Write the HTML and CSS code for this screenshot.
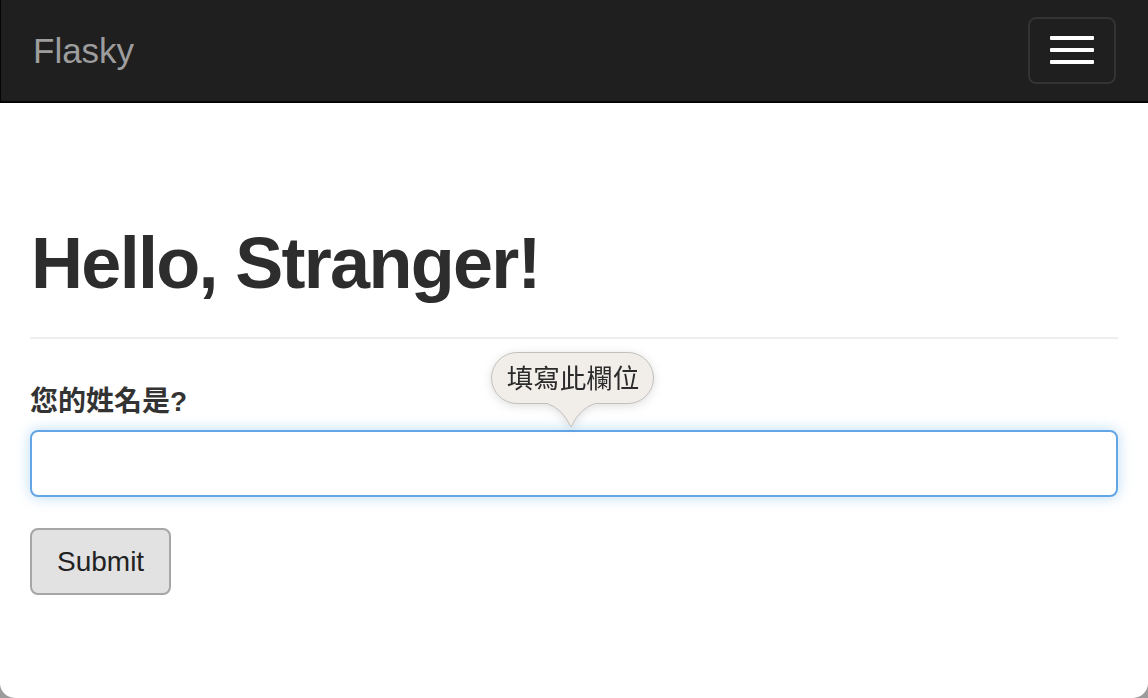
FILE: index.html
```html
<!DOCTYPE html>
<html lang="zh-Hant">
<head>
<meta charset="utf-8">
<title>Flasky</title>
<link rel="stylesheet" href="styles.css">
</head>
<body>
<div class="window">
  <nav class="navbar">
    <a class="brand" href="#">Flasky</a>
    <button class="toggle" type="button" aria-label="Toggle navigation">
      <span class="bar"></span><span class="bar"></span><span class="bar"></span>
    </button>
  </nav>
  <main class="container">
    <div class="page-header">
      <h1>Hello, Stranger!</h1>
    </div>
    <form class="form">
      <div class="form-group">
        <label class="label" for="name">您的姓名是?</label>
        <div class="field">
          <input class="input" id="name" type="text">
          <div class="tooltip">
            <svg class="tip-shape" width="172" height="86" viewBox="0 0 172 86">
              <path d="M29,2.5 H140 A25.5 25.5 0 0 1 140,53.5 H107 Q92,58 83,77 Q74,58 59,53.5 H29 A25.5 25.5 0 0 1 29,2.5 Z" fill="#f1eeea" stroke="#c2c0bd" stroke-width="1"/>
            </svg>
            <span class="tip-text">填寫此欄位</span>
          </div>
        </div>
      </div>
      <button class="submit" type="button">Submit</button>
    </form>
  </main>
</div>
</body>
</html>
```
FILE: styles.css
```css
html {
  background: #9c9c9c;
}
body {
  margin: 0;
  font-family: "Liberation Sans", Arial, "Noto Sans CJK TC", sans-serif;
  color: #333;
}
.window {
  height: 698px;
  background: #fff;
  border-radius: 0 0 15px 15px;
  overflow: hidden;
}
.navbar {
  height: 103px;
  background: #1f1f1f;
  border-bottom: 2px solid #050505;
  border-left: 1px solid #050505;
  display: flex;
  align-items: center;
  justify-content: space-between;
  padding: 0 32px 0 32px;
  box-sizing: border-box;
}
.brand {
  font-size: 35px;
  color: #9d9d9d;
  text-decoration: none;
  line-height: 1;
  margin-top: -1px;
}
.toggle {
  width: 88px;
  height: 67px;
  border: 2px solid #333;
  border-radius: 8px;
  background: transparent;
  display: flex;
  flex-direction: column;
  align-items: center;
  justify-content: center;
  gap: 8.5px;
  padding: 0;
  margin-top: -1px;
  margin-right: 0;
}
.bar {
  display: block;
  width: 44px;
  height: 3.5px;
  background: #fff;
  border-radius: 1px;
}
.container {
  padding: 0 30px 0 30px;
}
.page-header {
  margin-top: 121px;
  padding-bottom: 34px;
  border-bottom: 2px solid #eee;
  margin-bottom: 43px;
}
.page-header h1 {
  margin: 0;
  font-size: 72px;
  font-weight: 700;
  letter-spacing: -1.7px;
  line-height: 79px;
  color: #2d2d2d;
  padding-left: 1px;
}
.form-group {
  margin-bottom: 31px;
}
.label {
  display: block;
  font-size: 28px;
  font-weight: 700;
  line-height: 40px;
  margin-bottom: 8px;
  color: #333;
}
.field {
  position: relative;
}
.input {
  display: block;
  width: 100%;
  height: 67px;
  box-sizing: border-box;
  border: 2px solid #63a6e6;
  border-radius: 8px;
  background: #fff;
  outline: none;
  box-shadow: 0 0 14px rgba(102, 175, 233, 0.45);
  font-size: 28px;
  padding: 0 24px;
}
.tooltip {
  position: absolute;
  left: 458px;
  top: -80px;
  width: 172px;
  height: 86px;
  filter: drop-shadow(0 2px 5px rgba(0, 0, 0, 0.13));
}
.tip-shape {
  display: block;
}
.tip-text {
  position: absolute;
  left: 10px;
  top: 12px;
  width: 150px;
  text-align: center;
  font-family: "Noto Sans CJK TC", "Noto Sans CJK SC", sans-serif;
  font-size: 26.5px;
  line-height: 30px;
  color: #2b2b2b;
}
.submit {
  display: block;
  height: 67px;
  padding: 0 25px;
  border: 2px solid #a6a6a6;
  border-radius: 8px;
  background: #e2e2e2;
  font-family: "Liberation Sans", Arial, sans-serif;
  font-size: 28px;
  color: #222;
  line-height: 1;
}
```
